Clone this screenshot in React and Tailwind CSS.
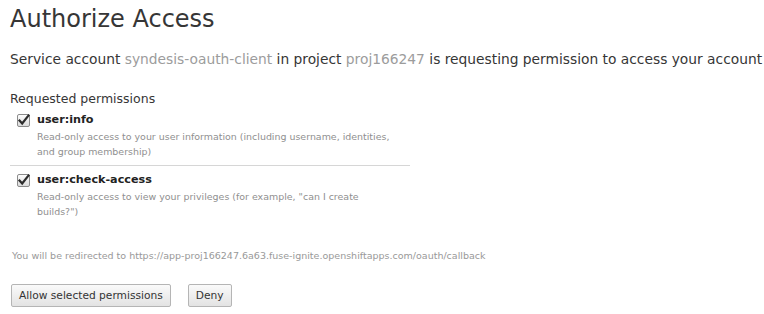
export default function App() {
  const Check = () => (
    <span className="mt-[1px] flex h-[13px] w-[13px] shrink-0 items-center justify-center rounded-[2px] border border-[#8c8c8c] bg-gradient-to-b from-[#fdfdfd] to-[#dcdcdc]">
      <svg width="13" height="13" viewBox="0 0 13 13" className="overflow-visible">
        <path d="M2.5 6.5 L5.2 9.5 L11.5 1.5" fill="none" stroke="#2e2e2e" strokeWidth="2.2" strokeLinecap="square" />
      </svg>
    </span>
  );
  return (
    <div className="min-h-[314px] w-[764px] bg-white font-['DejaVu_Sans',sans-serif] text-[#333]">
      <div className="px-[10px] pt-[3px]">
        <h1 className="text-[24px] leading-[33px] text-[#363636]">Authorize Access</h1>
        <p className="mt-[13px] whitespace-nowrap text-[13.8px] leading-[20px] text-[#363636]">
          Service account <span className="text-[#9c9c9c]">syndesis-oauth-client</span> in project{" "}
          <span className="text-[#9c9c9c]">proj166247</span> is requesting permission to access your account
        </p>
        <div className="mt-[22px] text-[12.5px] leading-[16px] text-[#363636]">Requested permissions</div>
        <div className="w-[400px]">
          <div className="flex gap-[7px] border-b border-[#d6d6d6] pb-[6px] pl-[7px] pt-[6px]">
            <Check />
            <div>
              <div className="text-[11.2px] font-bold leading-[14px] text-[#222]">user:info</div>
              <div className="mt-[2px] max-w-[358px] text-[9.45px] leading-[15px] text-[#8f8f8f]">
                Read-only access to your user information (including username, identities, and group membership)
              </div>
            </div>
          </div>
          <div className="flex gap-[7px] pl-[7px] pt-[7px]">
            <Check />
            <div>
              <div className="text-[11.2px] font-bold leading-[14px] text-[#222]">user:check-access</div>
              <div className="mt-[2px] max-w-[358px] text-[9.45px] leading-[15px] text-[#8f8f8f]">
                Read-only access to view your privileges (for example, "can I create builds?")
              </div>
            </div>
          </div>
        </div>
        <div className="mt-[31px] whitespace-nowrap pl-[2px] text-[9.5px] leading-[12px] text-[#999]">
          You will be redirected to https://app-proj166247.6a63.fuse-ignite.openshiftapps.com/oauth/callback
        </div>
        <div className="mt-[22px] flex gap-[17px] pl-[1px]">
          <button className="h-[23px] rounded-[2px] border border-[#b5b5b5] bg-gradient-to-b from-[#fafafa] to-[#e3e3e3] px-[7px] text-[10.65px] text-[#333]">
            Allow selected permissions
          </button>
          <button className="h-[23px] rounded-[2px] border border-[#b5b5b5] bg-gradient-to-b from-[#fafafa] to-[#e3e3e3] px-[7px] text-[10.65px] text-[#333]">
            Deny
          </button>
        </div>
      </div>
    </div>
  );
}
